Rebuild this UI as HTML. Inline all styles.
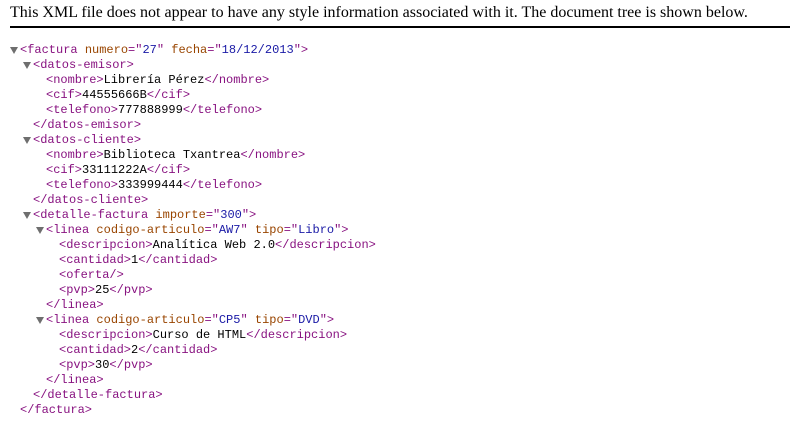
<!DOCTYPE html>
<html><head><meta charset="utf-8"><style>
body{margin:0;background:#fff;width:800px;height:433px;overflow:hidden;position:relative}
.hdr{position:absolute;left:10px;top:4px;font:16px "Liberation Serif",serif;color:#000;white-space:nowrap}
.rule{position:absolute;left:10px;top:26px;width:780px;height:2px;background:#000}
.r{position:absolute;font:12px/15px "Liberation Mono",monospace;letter-spacing:0px;white-space:pre;color:#000;margin-top:1px}
.t{color:#881280}.a{color:#994500}.v{color:#1a1aa6}
.tri{position:absolute;width:0;height:0;border-left:4px solid transparent;border-right:4px solid transparent;border-top:7px solid #6e6e6e;margin-top:1px}
</style></head><body>
<div class="hdr">This XML file does not appear to have any style information associated with it. The document tree is shown below.</div>
<div class="rule"></div>
<div class="tri" style="left:10px;top:46px"></div>
<div class="r" style="left:20px;top:42px"><span class="t">&lt;factura</span> <span class="a">numero</span><span class="t">="</span><span class="v">27</span><span class="t">"</span> <span class="a">fecha</span><span class="t">="</span><span class="v">18/12/2013</span><span class="t">"&gt;</span></div>
<div class="tri" style="left:23px;top:61px"></div>
<div class="r" style="left:33px;top:57px"><span class="t">&lt;datos-emisor&gt;</span></div>
<div class="r" style="left:46px;top:72px"><span class="t">&lt;nombre&gt;</span>Librería Pérez<span class="t">&lt;/nombre&gt;</span></div>
<div class="r" style="left:46px;top:87px"><span class="t">&lt;cif&gt;</span>44555666B<span class="t">&lt;/cif&gt;</span></div>
<div class="r" style="left:46px;top:102px"><span class="t">&lt;telefono&gt;</span>777888999<span class="t">&lt;/telefono&gt;</span></div>
<div class="r" style="left:33px;top:117px"><span class="t">&lt;/datos-emisor&gt;</span></div>
<div class="tri" style="left:23px;top:136px"></div>
<div class="r" style="left:33px;top:132px"><span class="t">&lt;datos-cliente&gt;</span></div>
<div class="r" style="left:46px;top:147px"><span class="t">&lt;nombre&gt;</span>Biblioteca Txantrea<span class="t">&lt;/nombre&gt;</span></div>
<div class="r" style="left:46px;top:162px"><span class="t">&lt;cif&gt;</span>33111222A<span class="t">&lt;/cif&gt;</span></div>
<div class="r" style="left:46px;top:177px"><span class="t">&lt;telefono&gt;</span>333999444<span class="t">&lt;/telefono&gt;</span></div>
<div class="r" style="left:33px;top:192px"><span class="t">&lt;/datos-cliente&gt;</span></div>
<div class="tri" style="left:23px;top:211px"></div>
<div class="r" style="left:33px;top:207px"><span class="t">&lt;detalle-factura</span> <span class="a">importe</span><span class="t">="</span><span class="v">300</span><span class="t">"&gt;</span></div>
<div class="tri" style="left:36px;top:226px"></div>
<div class="r" style="left:46px;top:222px"><span class="t">&lt;linea</span> <span class="a">codigo-articulo</span><span class="t">="</span><span class="v">AW7</span><span class="t">"</span> <span class="a">tipo</span><span class="t">="</span><span class="v">Libro</span><span class="t">"&gt;</span></div>
<div class="r" style="left:59px;top:237px"><span class="t">&lt;descripcion&gt;</span>Analítica Web 2.0<span class="t">&lt;/descripcion&gt;</span></div>
<div class="r" style="left:59px;top:252px"><span class="t">&lt;cantidad&gt;</span>1<span class="t">&lt;/cantidad&gt;</span></div>
<div class="r" style="left:59px;top:267px"><span class="t">&lt;oferta/&gt;</span></div>
<div class="r" style="left:59px;top:282px"><span class="t">&lt;pvp&gt;</span>25<span class="t">&lt;/pvp&gt;</span></div>
<div class="r" style="left:46px;top:297px"><span class="t">&lt;/linea&gt;</span></div>
<div class="tri" style="left:36px;top:316px"></div>
<div class="r" style="left:46px;top:312px"><span class="t">&lt;linea</span> <span class="a">codigo-articulo</span><span class="t">="</span><span class="v">CP5</span><span class="t">"</span> <span class="a">tipo</span><span class="t">="</span><span class="v">DVD</span><span class="t">"&gt;</span></div>
<div class="r" style="left:59px;top:327px"><span class="t">&lt;descripcion&gt;</span>Curso de HTML<span class="t">&lt;/descripcion&gt;</span></div>
<div class="r" style="left:59px;top:342px"><span class="t">&lt;cantidad&gt;</span>2<span class="t">&lt;/cantidad&gt;</span></div>
<div class="r" style="left:59px;top:357px"><span class="t">&lt;pvp&gt;</span>30<span class="t">&lt;/pvp&gt;</span></div>
<div class="r" style="left:46px;top:372px"><span class="t">&lt;/linea&gt;</span></div>
<div class="r" style="left:33px;top:387px"><span class="t">&lt;/detalle-factura&gt;</span></div>
<div class="r" style="left:20px;top:402px"><span class="t">&lt;/factura&gt;</span></div>
</body></html>
